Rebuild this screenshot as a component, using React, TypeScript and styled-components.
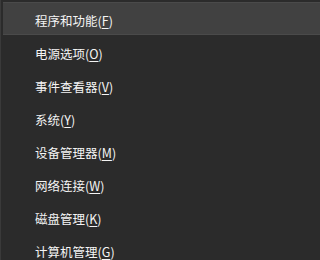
import React from "react";
import styled, { createGlobalStyle } from "styled-components";

const Global = createGlobalStyle`
  html, body {
    margin: 0;
    padding: 0;
    background: #2b2b2b;
  }
  body {
    min-height: 100vh;
    overflow: hidden;
  }
`;

const Menu = styled.div`
  width: 100%;
  min-height: 100vh;
  box-sizing: border-box;
  padding: 2px 0 0 2px;
  background: #2b2b2b;
  border-left: 1px solid #3a3a3a;
  display: flex;
  flex-direction: column;
  font-family: "Microsoft YaHei", "Noto Sans CJK SC", sans-serif;
`;

const Item = styled.div<{ $active?: boolean }>`
  height: 33px;
  flex: 0 0 33px;
  box-sizing: border-box;
  display: flex;
  align-items: center;
  padding-left: 32px;
  padding-top: 3px;
  color: #f4f4f4;
  font-size: 12.5px;
  white-space: nowrap;
  background: ${(p) => (p.$active ? "#414141" : "transparent")};
  border-top: 1px solid ${(p) => (p.$active ? "#4a4a4a" : "transparent")};
  border-bottom: 1px solid ${(p) => (p.$active ? "#4a4a4a" : "transparent")};
`;

const Key = styled.span`
  text-decoration: underline;
  text-underline-offset: 2px;
  text-decoration-thickness: 1px;
`;

const items: { label: string; key: string }[] = [
  { label: "程序和功能", key: "F" },
  { label: "电源选项", key: "O" },
  { label: "事件查看器", key: "V" },
  { label: "系统", key: "Y" },
  { label: "设备管理器", key: "M" },
  { label: "网络连接", key: "W" },
  { label: "磁盘管理", key: "K" },
  { label: "计算机管理", key: "G" },
];

export default function App() {
  return (
    <>
      <Global />
      <Menu>
        {items.map((it, i) => (
          <Item key={it.key} $active={i === 0}>
            {it.label}(<Key>{it.key}</Key>)
          </Item>
        ))}
      </Menu>
    </>
  );
}
